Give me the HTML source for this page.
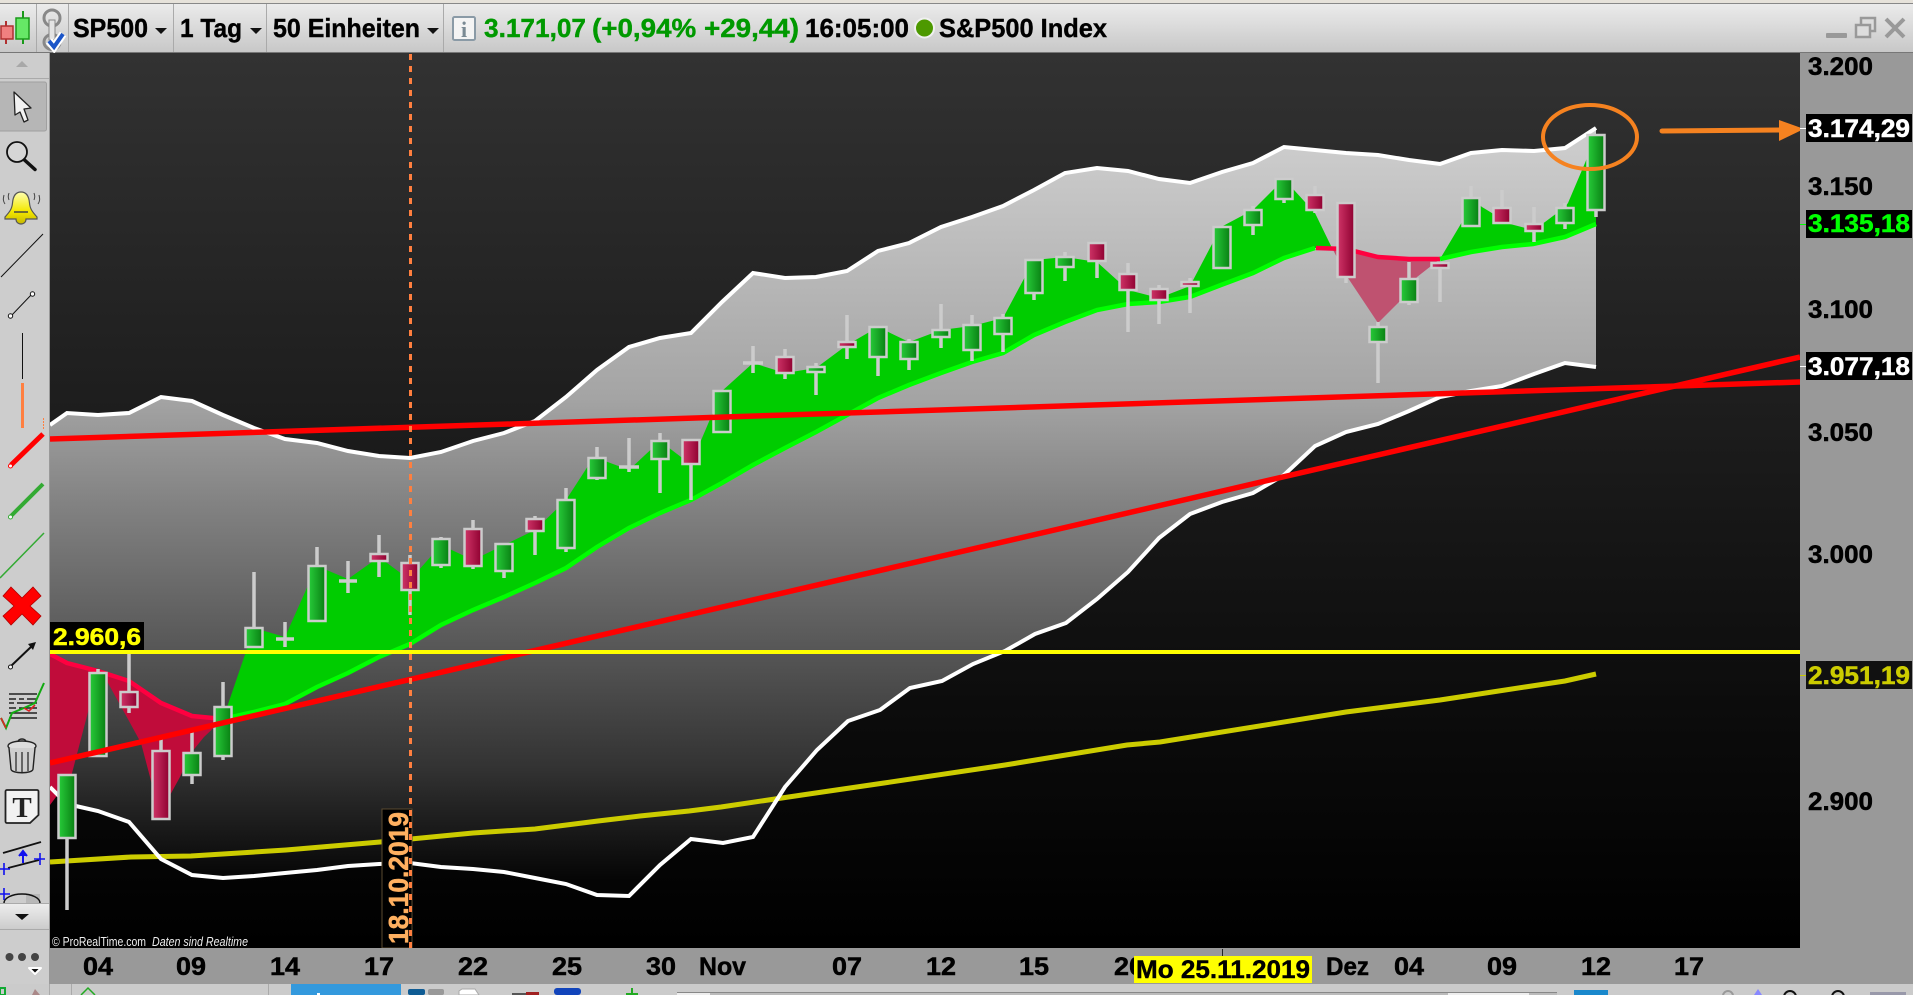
<!DOCTYPE html>
<html><head><meta charset="utf-8"><title>SP500</title>
<style>
html,body{margin:0;padding:0;background:#ccc;width:1913px;height:995px;overflow:hidden}
svg{display:block}
text{font-family:"Liberation Sans",sans-serif;font-weight:bold}
.w{stroke:#ccc;stroke-width:3.500;fill:none}
.g{fill:url(#cg);stroke:#ccc;stroke-width:2.500}
.r{fill:url(#cr);stroke:#ccc;stroke-width:2.500}
.ax{fill:#000;font-size:25px;stroke:#000;stroke-width:.5px}
.px{fill:#000;font-size:25px;stroke:#000;stroke-width:.5px}
.tb{fill:#000;font-size:26px;stroke:#000;stroke-width:.4px}
.sep{stroke:#aaa;stroke-width:1}
</style></head><body>
<svg xmlns="http://www.w3.org/2000/svg" width="1913" height="995" viewBox="0 0 1913 995">
<defs>
<linearGradient id="tbg" x1="0" y1="0" x2="0" y2="1"><stop offset="0" stop-color="#ebebeb"/><stop offset="1" stop-color="#c8c8c8"/></linearGradient>
<linearGradient id="bg" gradientUnits="userSpaceOnUse" x1="0" y1="52" x2="0" y2="948"><stop offset="0" stop-color="#323232"/><stop offset=".4" stop-color="#1d1d1d"/><stop offset=".75" stop-color="#0b0b0b"/><stop offset="1" stop-color="#000"/></linearGradient>
<linearGradient id="band" gradientUnits="userSpaceOnUse" x1="0" y1="128" x2="0" y2="880"><stop offset="0" stop-color="#cfcfcf"/><stop offset=".36" stop-color="#a4a4a4"/><stop offset=".5" stop-color="#828282"/><stop offset=".7" stop-color="#555"/><stop offset=".85" stop-color="#333"/><stop offset="1" stop-color="#050505"/></linearGradient>
<linearGradient id="cg" x1="0" y1="0" x2="1" y2="0"><stop offset="0" stop-color="#28cc3a"/><stop offset="1" stop-color="#087f12"/></linearGradient>
<linearGradient id="cr" x1="0" y1="0" x2="1" y2="0"><stop offset="0" stop-color="#d03568"/><stop offset="1" stop-color="#8e0030"/></linearGradient>
<linearGradient id="bell" x1="0" y1="0" x2="0" y2="1"><stop offset="0" stop-color="#ffffb0"/><stop offset=".6" stop-color="#f4e800"/><stop offset="1" stop-color="#c8b800"/></linearGradient>
<linearGradient id="scroll" x1="0" y1="0" x2="0" y2="1"><stop offset="0" stop-color="#eee"/><stop offset="1" stop-color="#ccc"/></linearGradient>
<clipPath id="chart"><rect x="50" y="52" width="1750" height="896"/></clipPath>
</defs>

<!-- window backgrounds -->
<rect width="1913" height="995" fill="#999"/>
<rect width="1913" height="3" fill="#e6e2da"/>
<rect y="3" width="1913" height="1" fill="#888"/>
<rect y="4" width="1913" height="48" fill="url(#tbg)"/>
<rect y="52" width="1913" height="1" fill="#777"/>

<!-- top toolbar -->
<line class="sep" x1="36.500" y1="4" x2="36.500" y2="52"/>
<line class="sep" x1="68.500" y1="4" x2="68.500" y2="52"/>
<line class="sep" x1="173.500" y1="4" x2="173.500" y2="52"/>
<line class="sep" x1="266.500" y1="4" x2="266.500" y2="52"/>
<line class="sep" x1="443.500" y1="4" x2="443.500" y2="52"/>
<!-- candles icon -->
<line x1="6" y1="21" x2="6" y2="44" stroke="#b03030" stroke-width="2"/>
<rect x="1" y="26" width="12" height="13" fill="#f08080" stroke="#b03030" stroke-width="1.500"/>
<line x1="23" y1="11" x2="23" y2="44" stroke="#1a9a1a" stroke-width="2"/>
<rect x="16" y="18" width="13" height="21" fill="#66e866" stroke="#1a9a1a" stroke-width="1.500"/>
<!-- link icon -->
<ellipse cx="52" cy="18" rx="8" ry="8" fill="none" stroke="#888" stroke-width="3"/>
<ellipse cx="52" cy="42" rx="8" ry="7.500" fill="none" stroke="#888" stroke-width="3"/>
<rect x="49" y="20" width="6" height="20" fill="#e4e4e4" stroke="#888"/>
<path d="M49 41l5 6 9-13" fill="none" stroke="#fff" stroke-width="8"/>
<path d="M49 41l5 6 9-13" fill="none" stroke="#1b55c8" stroke-width="4"/>

<text class="tb" x="73" y="37" textLength="75" lengthAdjust="spacingAndGlyphs">SP500</text>
<path d="M155 28h12l-6 6z" fill="#111"/>
<text class="tb" x="180" y="37" textLength="62" lengthAdjust="spacingAndGlyphs">1 Tag</text>
<path d="M250 28h12l-6 6z" fill="#111"/>
<text class="tb" x="273" y="37" textLength="147" lengthAdjust="spacingAndGlyphs">50 Einheiten</text>
<path d="M427 28h12l-6 6z" fill="#111"/>
<!-- info -->
<rect x="453" y="17" width="22" height="23" rx="1.500" fill="#f4f4f4" stroke="#8a9aa6" stroke-width="2"/>
<text x="464" y="37" text-anchor="middle" style="font-family:'Liberation Serif',serif;font-size:22px" fill="#7a8a94">i</text>

<text x="484" y="37" font-size="26" fill="#009900" stroke="#009900" stroke-width=".4" textLength="102" lengthAdjust="spacingAndGlyphs">3.171,07</text>
<text x="592" y="37" font-size="26" fill="#009900" stroke="#009900" stroke-width=".4" textLength="207" lengthAdjust="spacingAndGlyphs">(+0,94% +29,44)</text>
<text class="tb" x="805" y="37" textLength="104" lengthAdjust="spacingAndGlyphs">16:05:00</text>
<circle cx="924.500" cy="28" r="9.500" fill="#4d9900" stroke="#f0f0f0" stroke-width="2"/>
<text class="tb" x="939" y="37" textLength="168" lengthAdjust="spacingAndGlyphs">S&amp;P500 Index</text>

<!-- window buttons -->
<rect x="1826" y="33" width="21" height="5" rx="1" fill="#999"/>
<rect x="1861" y="18" width="14" height="13" fill="#ddd" stroke="#999" stroke-width="2.500"/>
<rect x="1856" y="25" width="14" height="12" fill="#ddd" stroke="#999" stroke-width="2.500"/>
<path d="M1886 19l18 18M1904 19l-18 18" stroke="#999" stroke-width="4"/>

<!-- chart background -->
<rect x="50" y="53" width="1750" height="895" fill="url(#bg)"/>

<g clip-path="url(#chart)">
<!-- bollinger fill -->
<path fill="url(#band)" d="M50 425L67 413 98 415 129 413 161 397 192 401 223 415 254 428 285 439 317 443 348 451 379 456 410 458 441 452 473 441 504 433 535 421 566 397 597 370 629 347 660 338 691 333 722 302 753 273 785 278 816 277 847 271 878 251 909 243 941 227 972 217 1003 206 1034 190 1065 173 1097 168 1128 171 1159 179 1190 183 1222 172 1253 163 1284 147 1315 150 1346 153 1378 155 1409 160 1440 164 1471 153 1502 150 1534 151 1565 148 1596 128V367L1565 363 1534 374 1502 386 1471 391 1440 397 1409 411 1378 424 1346 432 1315 446 1284 475 1253 493 1222 502 1190 514 1159 538 1128 572 1097 599 1066 623 1035 634 1005 651 973 664 942 681 910 688 880 710 848 721 817 750 785 787 753 837 723 843 691 839 660 865 629 896 597 895 566 884 535 878 504 872 473 869 441 867 410 863 379 864 348 866 317 870 285 873 254 876 223 878 192 875 161 859 129 822 98 811 67 804 50 787Z"/>
<!-- green area -->
<path fill="#00cc00" d="M223 719L254 628 285 637 306 590 317 566 348 579 379 557 410 580 441 545 473 560 504 545 535 530 566 500 588 466 597 458 629 470 660 441 681 457 691 464 722 391 753 363 785 373 816 368 847 345 878 327 909 342 941 330 972 326 1003 318 1034 260 1065 257 1097 262 1128 290 1159 298 1190 286 1221 227 1253 210 1284 179 1315 213 1332 248 1315 248 1284 258 1253 273 1221 285 1190 297 1159 302 1128 304 1097 310 1065 322 1034 335 1003 353 972 362 941 373 909 385 878 398 847 415 816 432 785 448 753 465 722 483 691 500 660 513 629 528 597 547 566 568 535 583 504 597 473 610 441 625 410 644 379 657 348 673 317 687 285 704 254 712Z"/>
<path fill="#00cc00" d="M1440 259L1462 222 1471 198 1482 207 1510 224 1533 230 1545 222 1565 207 1568 203 1585 163 1596 135V224L1565 237 1533 244 1502 247 1471 252Z"/>
<!-- red areas -->
<path fill="#c00c3a" d="M50 654L67 663 98 671 129 681 161 703 192 716 223 719 204 737 191 753 180 777 169 797 160 817 150 777 141 743 129 721 108 683 98 673 88 712 71 777 50 805Z"/>
<path fill="#bf5270" d="M1332 248L1346 249 1378 257 1409 259 1440 259 1417 277 1399 302 1378 323 1348 278Z"/>
<!-- yellow MA -->
<path fill="none" stroke="#cccc00" stroke-width="5" d="M50 862L131 857 191 856 286 850 380 842 473 833 535 829 598 821 640 816 689 811 721 807 802 795 884 783 1005 765 1127 745 1160 742 1346 712 1440 700 1525 687 1565 681 1596 674"/>
<!-- MA lines -->
<path fill="none" stroke="#ff0040" stroke-width="4.500" d="M50 654L67 663 98 671 129 681 161 703 192 716 223 719"/>
<path fill="none" stroke="#00ff00" stroke-width="4.500" d="M223 719L254 712 285 704 317 687 348 673 379 657 410 644 441 625 473 610 504 597 535 583 566 568 597 547 629 528 660 513 691 500 722 483 753 465 785 448 816 432 847 415 878 398 909 385 941 373 972 362 1003 353 1034 335 1065 322 1097 310 1128 304 1159 302 1190 297 1221 285 1253 273 1284 258 1315 248"/>
<path fill="none" stroke="#ff0040" stroke-width="4.500" d="M1316 248L1346 249 1378 257 1409 259 1440 259"/>
<path fill="none" stroke="#00ff00" stroke-width="4.500" d="M1440 259L1471 252 1502 247 1533 244 1565 237 1596 224"/>
<!-- bollinger lines -->
<path fill="none" stroke="#fff" stroke-width="4" d="M50 425L67 413 98 415 129 413 161 397 192 401 223 415 254 428 285 439 317 443 348 451 379 456 410 458 441 452 473 441 504 433 535 421 566 397 597 370 629 347 660 338 691 333 722 302 753 273 785 278 816 277 847 271 878 251 909 243 941 227 972 217 1003 206 1034 190 1065 173 1097 168 1128 171 1159 179 1190 183 1222 172 1253 163 1284 147 1315 150 1346 153 1378 155 1409 160 1440 164 1471 153 1502 150 1534 151 1565 148 1596 128"/>
<path fill="none" stroke="#fff" stroke-width="4" d="M50 787L67 804 98 811 129 822 161 859 192 875 223 878 254 876 285 873 317 870 348 866 379 864 410 863 441 867 473 869 504 872 535 878 566 884 597 895 629 896 660 865 691 839 723 843 753 837 785 787 817 750 848 721 880 710 910 688 942 681 973 664 1005 651 1035 634 1066 623 1097 599 1128 572 1159 538 1190 514 1222 502 1253 493 1284 475 1315 446 1346 432 1378 424 1409 411 1440 397 1471 391 1502 386 1534 374 1565 363 1596 367"/>

<!-- candles -->
<path class="w" d="M67 838V910M98 669V673M129 654V692M129 707V713M161 739V751M192 732V753M192 775V784M223 682V707M223 756V760M254 572V628M285 622V647M276 639H294M317 547V566M348 561V593M339 581H357M379 535V577M410 555V563M410 590V615M441 537V539M441 565V568M473 520V529M473 566V569M504 571V578M535 516V519M535 531V555M566 488V500M566 548V552M597 447V458M597 478V480M629 438V472M619 467H639M660 433V441M660 459V493M691 464V500M753 346V373M743 363H763M785 349V357M785 373V379M816 363V367M816 372V395M847 315V342M847 347V359M878 357V376M909 339V342M909 359V370M941 304V330M941 337V348M972 315V325M972 350V361M1003 314V318M1003 334V352M1034 293V300M1065 252V257M1065 267V281M1097 261V278M1128 263V274M1128 290V332M1159 285V289M1159 300V324M1190 278V282M1190 286V313M1253 206V210M1253 225V235M1284 199V203M1315 186V195M1315 210V213M1346 277V283M1378 322V327M1378 342V383M1409 262V279M1409 302V305M1440 268V302M1471 186V198M1502 190V208M1534 207V224M1534 231V242M1565 203V208M1565 223V229M1596 210V217"/>
<rect class="g" x="58.500" y="775" width="17" height="63"/>
<rect class="g" x="89.500" y="673" width="17" height="83"/>
<rect class="r" x="120.500" y="692" width="17" height="15"/>
<rect class="r" x="152.500" y="751" width="17" height="68"/>
<rect class="g" x="183.500" y="753" width="17" height="22"/>
<rect class="g" x="214.500" y="707" width="17" height="49"/>
<rect class="g" x="245.500" y="628" width="17" height="19"/>
<rect class="g" x="308.500" y="566" width="17" height="55"/>
<rect class="r" x="370.500" y="554" width="17" height="7"/>
<rect class="r" x="401.500" y="563" width="17" height="27"/>
<rect class="g" x="432.500" y="539" width="17" height="26"/>
<rect class="r" x="464.500" y="529" width="17" height="37"/>
<rect class="g" x="495.500" y="544" width="17" height="27"/>
<rect class="r" x="526.500" y="519" width="17" height="12"/>
<rect class="g" x="557.500" y="500" width="17" height="48"/>
<rect class="g" x="588.500" y="458" width="17" height="20"/>
<rect class="g" x="651.500" y="441" width="17" height="18"/>
<rect class="r" x="682.500" y="440" width="17" height="24"/>
<rect class="g" x="713.500" y="391" width="17" height="41"/>
<rect class="r" x="776.500" y="357" width="17" height="16"/>
<rect class="g" x="807.500" y="367" width="17" height="5"/>
<rect class="r" x="838.500" y="342" width="17" height="5"/>
<rect class="g" x="869.500" y="327" width="17" height="30"/>
<rect class="g" x="900.500" y="342" width="17" height="17"/>
<rect class="g" x="932.500" y="330" width="17" height="7"/>
<rect class="g" x="963.500" y="325" width="17" height="25"/>
<rect class="g" x="994.500" y="318" width="17" height="16"/>
<rect class="g" x="1025.500" y="260" width="17" height="33"/>
<rect class="g" x="1056.500" y="257" width="17" height="10"/>
<rect class="r" x="1088.500" y="243" width="17" height="18"/>
<rect class="r" x="1119.500" y="274" width="17" height="16"/>
<rect class="r" x="1150.500" y="289" width="17" height="11"/>
<rect class="r" x="1181.500" y="282" width="17" height="4"/>
<rect class="g" x="1213.500" y="227" width="17" height="41"/>
<rect class="g" x="1244.500" y="210" width="17" height="15"/>
<rect class="g" x="1275.500" y="179" width="17" height="20"/>
<rect class="r" x="1306.500" y="195" width="17" height="15"/>
<rect class="r" x="1337.500" y="203" width="17" height="74"/>
<rect class="g" x="1369.500" y="327" width="17" height="15"/>
<rect class="g" x="1400.500" y="279" width="17" height="23"/>
<rect class="r" x="1431.500" y="263" width="17" height="5"/>
<rect class="g" x="1462.500" y="198" width="17" height="28"/>
<rect class="r" x="1493.500" y="208" width="17" height="15"/>
<rect class="r" x="1525.500" y="224" width="17" height="7"/>
<rect class="g" x="1556.500" y="208" width="17" height="15"/>
<rect class="g" x="1587.500" y="135" width="17" height="75"/>

<!-- trend lines -->
<line x1="50" y1="439" x2="1800" y2="382" stroke="#ff0000" stroke-width="5.500"/>
<line x1="50" y1="763" x2="1800" y2="357" stroke="#ff0000" stroke-width="5.500"/>
<line x1="50" y1="652" x2="1800" y2="652" stroke="#ffff00" stroke-width="4"/>

<!-- date label + dashed line -->
<rect x="382" y="809" width="30" height="139" fill="#000" stroke="#5a4a30" stroke-width="1"/>
<text transform="translate(408 944) rotate(-90)" font-size="28" fill="#ffb060" stroke="#ffb060" stroke-width=".5" textLength="132" lengthAdjust="spacingAndGlyphs">18.10.2019</text>
<line x1="410.500" y1="54" x2="410.500" y2="948" stroke="#ff7f3f" stroke-width="3" stroke-dasharray="6 6"/>

<!-- level label -->
<rect x="50" y="622" width="94" height="28" fill="#000"/>
<text x="53" y="645" font-size="24" fill="#ffff00" stroke="#ffff00" stroke-width=".5" textLength="88" lengthAdjust="spacingAndGlyphs">2.960,6</text>

<!-- copyright -->
<text x="52" y="946" style="font-weight:normal" font-size="13" fill="#eee" textLength="94" lengthAdjust="spacingAndGlyphs">© ProRealTime.com</text>
<text x="152" y="946" style="font-weight:normal;font-style:italic" font-size="13" fill="#eee" textLength="96" lengthAdjust="spacingAndGlyphs">Daten sind Realtime</text>

<!-- annotation -->
<ellipse cx="1590" cy="137" rx="47" ry="32" fill="none" stroke="#f58220" stroke-width="4"/>
<path d="M1662 131L1781 130" stroke="#f58220" stroke-width="5" stroke-linecap="round"/>
<path d="M1779 120L1804 129 1779 141Z" fill="#f58220"/>
</g>

<!-- price axis -->
<g class="pxs">
<text class="px" x="1808" y="75" textLength="65" lengthAdjust="spacingAndGlyphs">3.200</text>
<text class="px" x="1808" y="195" textLength="65" lengthAdjust="spacingAndGlyphs">3.150</text>
<text class="px" x="1808" y="318" textLength="65" lengthAdjust="spacingAndGlyphs">3.100</text>
<text class="px" x="1808" y="441" textLength="65" lengthAdjust="spacingAndGlyphs">3.050</text>
<text class="px" x="1808" y="563" textLength="65" lengthAdjust="spacingAndGlyphs">3.000</text>
<text class="px" x="1808" y="810" textLength="65" lengthAdjust="spacingAndGlyphs">2.900</text>
<rect x="1800" y="128" width="6" height="1" fill="#fff"/>
<rect x="1800" y="224" width="6" height="1" fill="#0f0"/>
<rect x="1800" y="366" width="6" height="1" fill="#fff"/>
<rect x="1800" y="675" width="6" height="1" fill="#cc0"/>
<rect x="1806" y="114" width="106" height="28" fill="#000"/>
<text x="1808" y="137" font-size="25" fill="#fff" stroke="#fff" stroke-width=".5" textLength="102" lengthAdjust="spacingAndGlyphs">3.174,29</text>
<rect x="1806" y="210" width="106" height="28" fill="#000"/>
<text x="1808" y="232" font-size="25" fill="#00ff00" stroke="#00ff00" stroke-width=".5" textLength="102" lengthAdjust="spacingAndGlyphs">3.135,18</text>
<rect x="1806" y="352" width="106" height="28" fill="#000"/>
<text x="1808" y="375" font-size="25" fill="#fff" stroke="#fff" stroke-width=".5" textLength="102" lengthAdjust="spacingAndGlyphs">3.077,18</text>
<rect x="1806" y="661" width="106" height="28" fill="#111"/>
<text x="1808" y="684" font-size="25" fill="#cccc00" stroke="#cccc00" stroke-width=".5" textLength="102" lengthAdjust="spacingAndGlyphs">2.951,19</text>
</g>

<!-- time axis -->
<text class="ax" x="83" y="975" textLength="30" lengthAdjust="spacingAndGlyphs">04</text>
<text class="ax" x="176" y="975" textLength="30" lengthAdjust="spacingAndGlyphs">09</text>
<text class="ax" x="270" y="975" textLength="30" lengthAdjust="spacingAndGlyphs">14</text>
<text class="ax" x="364" y="975" textLength="30" lengthAdjust="spacingAndGlyphs">17</text>
<text class="ax" x="458" y="975" textLength="30" lengthAdjust="spacingAndGlyphs">22</text>
<text class="ax" x="552" y="975" textLength="30" lengthAdjust="spacingAndGlyphs">25</text>
<text class="ax" x="646" y="975" textLength="30" lengthAdjust="spacingAndGlyphs">30</text>
<text class="ax" x="699" y="975" textLength="47" lengthAdjust="spacingAndGlyphs">Nov</text>
<text class="ax" x="832" y="975" textLength="30" lengthAdjust="spacingAndGlyphs">07</text>
<text class="ax" x="926" y="975" textLength="30" lengthAdjust="spacingAndGlyphs">12</text>
<text class="ax" x="1019" y="975" textLength="30" lengthAdjust="spacingAndGlyphs">15</text>
<text class="ax" x="1114" y="975" textLength="30" lengthAdjust="spacingAndGlyphs">20</text>
<rect x="1222" y="949" width="1" height="7" fill="#222"/>
<rect x="1134" y="956" width="178" height="27" fill="#ffff00"/>
<text x="1136" y="978" font-size="25" fill="#000" stroke="#000" stroke-width=".4" textLength="174" lengthAdjust="spacingAndGlyphs">Mo 25.11.2019</text>
<text class="ax" x="1326" y="975" textLength="43" lengthAdjust="spacingAndGlyphs">Dez</text>
<text class="ax" x="1394" y="975" textLength="30" lengthAdjust="spacingAndGlyphs">04</text>
<text class="ax" x="1487" y="975" textLength="30" lengthAdjust="spacingAndGlyphs">09</text>
<text class="ax" x="1581" y="975" textLength="30" lengthAdjust="spacingAndGlyphs">12</text>
<text class="ax" x="1674" y="975" textLength="30" lengthAdjust="spacingAndGlyphs">17</text>

<!-- left toolbar -->
<rect x="0" y="53" width="49" height="931" fill="#cdcdcd"/>
<rect x="49" y="53" width="1" height="931" fill="#999"/>
<path d="M16 67l6-6 6 6z" fill="#a8a8a8"/>
<rect y="78" width="49" height="1" fill="#aaa"/>
<rect x="-2" y="82" width="48.500" height="49" rx="2" fill="#b6b6b6" stroke="#a0a0a0"/>
<path d="M14 92L31 108 24 109 28 120 24 122 20 112 15 115Z" fill="#f2f2f2" stroke="#222" stroke-width="1.300" stroke-linejoin="round"/>
<circle cx="17" cy="152" r="10" fill="#d6d6d6" stroke="#111" stroke-width="1.800"/>
<path d="M24.500 160L35 169.500" stroke="#111" stroke-width="3.500" stroke-linecap="round"/>
<!-- bell -->
<path d="M21 192c-6 0-8 5-8.500 11-.5 6-3 9-7.500 14v2h11c0 3 2 5 5 5s5-2 5-5h11v-2c-4.500-5-7-8-7.500-14-.5-6-2.500-11-8.500-11z" fill="url(#bell)" stroke="#555" stroke-width="1.200"/>
<path d="M14 212h14" stroke="#444" stroke-width="1.500"/>
<path d="M4 195c-1 4-1 6 1 9M9 193c-1 3-1 4 0 7M39 195c1 4 1 6-1 9M34 193c1 3 1 4 0 7" fill="none" stroke="#444" stroke-width="1"/>
<!-- line tools -->
<line x1="1" y1="277" x2="43" y2="234" stroke="#111" stroke-width="1"/>
<line x1="11" y1="316" x2="32" y2="294" stroke="#111" stroke-width="1"/>
<circle cx="10.500" cy="316" r="2.200" fill="#fff" stroke="#111"/>
<circle cx="32.500" cy="294" r="2.200" fill="#fff" stroke="#111"/>
<line x1="22.500" y1="333" x2="22.500" y2="379" stroke="#111" stroke-width="1"/>
<rect x="21" y="383" width="3" height="45" fill="#ff7f40"/>
<line x1="43.500" y1="418" x2="43.500" y2="430" stroke="#ff7f40" stroke-width="1" stroke-dasharray="2 1"/>
<line x1="11" y1="465" x2="43" y2="434" stroke="#ff0000" stroke-width="5"/>
<circle cx="10.500" cy="466" r="2" fill="#fff" stroke="#f00"/>
<line x1="11" y1="516" x2="43" y2="484" stroke="#33aa33" stroke-width="4"/>
<circle cx="10.500" cy="517" r="2" fill="#fff" stroke="#3a3"/>
<line x1="0" y1="578" x2="44" y2="533" stroke="#33aa33" stroke-width="1.500"/>
<!-- red X -->
<path d="M11 587L22 598 33 587 41 596 30 606 41 616 33 625 22 614 11 625 3 616 14 606 3 596Z" fill="#ff0000" stroke="#b00000" stroke-width=".800"/>
<!-- arrow -->
<line x1="11" y1="666" x2="33" y2="645" stroke="#111" stroke-width="2"/>
<path d="M36 642l-8 2 5 6z" fill="#111"/>
<circle cx="10.500" cy="667" r="2" fill="#fff" stroke="#111"/>
<!-- list icon -->
<path d="M9 694h28M9 699h7M19 699h5M27 699h10M9 703h5M17 703h20M9 708h7M19 708h18M9 713h28M9 718h28" stroke="#222" stroke-width="1.600" fill="none"/>
<path d="M1 718l5 10 6-15 12-5 11-5 9-20" fill="none" stroke="#11aa11" stroke-width="2"/>
<path d="M1 718l5 10M24 708l5 3 6-6" fill="none" stroke="#dd2222" stroke-width="1.600"/>
<!-- trash -->
<ellipse cx="22" cy="746" rx="14" ry="5" fill="#ddd" stroke="#222" stroke-width="1.400"/>
<path d="M18 742c0-4 8-4 8 0" fill="none" stroke="#222" stroke-width="1.400"/>
<path d="M9 748l2 21c0 5 22 5 22 0l2-21" fill="#cfcfcf" stroke="#222" stroke-width="1.400"/>
<path d="M16 752v19M22 752v20M28 752v19" stroke="#222" stroke-width="1.200"/>
<!-- T -->
<path d="M7 790H37a1.500 1.500 0 0 1 1.500 1.500V815L30 823H7a1.500 1.500 0 0 1-1.500-1.500V791.500A1.500 1.500 0 0 1 7 790Z" fill="#f2f2f2" stroke="#222" stroke-width="1.800"/>
<text x="22" y="817" text-anchor="middle" style="font-family:'Liberation Serif',serif;font-size:29px" fill="#222">T</text>
<!-- channel -->
<line x1="3" y1="853" x2="41" y2="842" stroke="#111" stroke-width="1.800"/>
<line x1="8" y1="868" x2="39" y2="860" stroke="#111" stroke-width="1.800"/>
<path d="M23 863V853M19 856l4-5 4 5" stroke="#1010ee" stroke-width="2" fill="#1010ee"/>
<path d="M40 853v12M34 859h11M4 863v12M-1 869h11M4 888v12M-1 894h11" stroke="#1010ee" stroke-width="1.600"/>
<rect x="26" y="894" width="14" height="9" fill="#b8b8b8"/>
<path d="M4 903a18 9 0 0 1 36 0" fill="none" stroke="#111" stroke-width="1.500"/>
<!-- scroll down -->
<rect x="0" y="903" width="49" height="26" fill="url(#scroll)"/>
<rect x="0" y="903" width="49" height="1" fill="#aaa"/>
<rect x="0" y="929" width="49" height="1" fill="#aaa"/>
<path d="M15 914h14l-7 6z" fill="#111"/>
<circle cx="9.500" cy="957" r="4" fill="#444"/>
<circle cx="22" cy="957" r="4" fill="#444"/>
<circle cx="35" cy="957" r="4" fill="#444"/>
<path d="M29 968h12l-6 6z" fill="#111" stroke="#fff" stroke-width="2" stroke-linejoin="round"/>

<!-- bottom bar -->
<rect x="0" y="984" width="1913" height="11" fill="#cbcbcb"/>
<rect x="49" y="984" width="1" height="11" fill="#aaa"/>
<rect x="71" y="984" width="1" height="11" fill="#aaa"/>
<rect x="268" y="984" width="1" height="11" fill="#aaa"/>
<rect x="291" y="984" width="110" height="11" fill="#3399dd"/>
<path d="M0 988h5v7H0z" fill="none" stroke="#11aa33" stroke-width="2"/>
<path d="M32 995l3-6 5 6z" fill="#a88"/>
<path d="M81 995l7-7 7 7" fill="none" stroke="#22aa22" stroke-width="1.500"/>
<rect x="317" y="993" width="3" height="2" fill="#fff"/>
<rect x="408" y="989" width="17" height="6" rx="2" fill="#0f5c94"/>
<rect x="428" y="989" width="16" height="6" rx="2" fill="#999"/>
<path d="M459 991l3-2h13l4 6h-20z" fill="#fff" stroke="#aaa"/>
<rect x="512" y="993" width="27" height="2" fill="#555"/>
<rect x="526" y="992" width="13" height="3" fill="#a02020"/>
<rect x="554" y="988" width="27" height="7" rx="3" fill="#1144bb"/>
<path d="M632 988v7M626 994h12" stroke="#22aa22" stroke-width="2"/>
<rect x="677" y="992" width="880" height="3" fill="#bbb"/>
<rect x="677" y="992" width="880" height="1" fill="#888"/>
<rect x="677" y="993" width="33" height="2" fill="#eee"/>
<rect x="1448" y="993" width="81" height="2" fill="#eee"/>
<rect x="1574" y="990" width="34" height="5" fill="#1a88cc"/>
<circle cx="1728" cy="996" r="5" fill="none" stroke="#999" stroke-width="2"/>
<path d="M1754 995l4-6 4 6z" fill="#88f"/>
<circle cx="1790" cy="997" r="6" fill="none" stroke="#111" stroke-width="2"/>
<circle cx="1838" cy="997" r="6" fill="none" stroke="#111" stroke-width="2"/>
<rect x="1870" y="992" width="36" height="3" fill="#99a"/>
</svg>
</body></html>
